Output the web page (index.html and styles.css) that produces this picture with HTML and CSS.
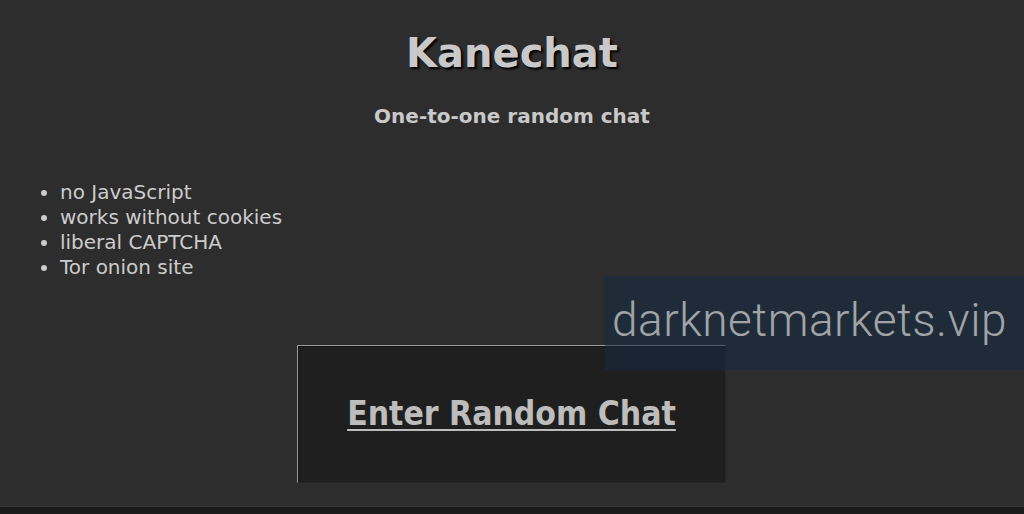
FILE: index.html
```html
<!DOCTYPE html>
<html lang="en">
  <head>
    <meta charset="utf-8">
    <meta name="viewport" content="width=device-width, initial-scale=1">
    <title>Kanechat</title>
    <link rel="stylesheet" href="styles.css">
  </head>

  <body>
    <div class="page">
      <h1 class="title">Kanechat</h1>
      <p class="tagline">One-to-one random chat</p>
      <ul class="features">
        <li>no JavaScript</li>
        <li>works without cookies</li>
        <li>liberal CAPTCHA</li>
        <li>Tor onion site</li>
      </ul>
      <div class="enter">
        <a href="#" class="enter-link">Enter Random Chat</a>
      </div>
    </div>
    <div class="footer"></div>
    <div class="watermark">darknetmarkets.vip</div>
  </body>
</html>
```

FILE: styles.css
```css
html {
  background: #1b1b1b;
}
body {
  margin: 0;
  background: #2d2d2d;
  color: #cccccc;
  font-family: "DejaVu Sans", sans-serif;
}
.page {
  height: 506px;
  overflow: hidden;
}
.title {
  margin: 30px 0 0;
  text-align: center;
  font-size: 40px;
  line-height: 46px;
  color: #c9c9c9;
  text-shadow: 2px 2px 2px #000;
}
.tagline {
  margin: 28px 0 0;
  text-align: center;
  font-size: 20px;
  font-weight: bold;
  line-height: 24px;
  color: #c9c9c9;
}
.features {
  margin: 52px 0 0;
  padding-left: 60px;
  font-size: 20px;
  line-height: 25px;
}
.enter {
  box-sizing: border-box;
  width: 429px;
  height: 138px;
  margin: 65px 0 0 297px;
  display: flex;
  justify-content: center;
  align-items: center;
  background: #1f1f1f;
  border: 1px solid #262626;
  border-top-color: #9a9a9a;
  border-left-color: #9a9a9a;
  box-shadow: inset 1px 1px 0 #151515;
}
.enter-link {
  margin-bottom: 2px;
  font-family: "DejaVu Sans Condensed", "DejaVu Sans", sans-serif;
  font-stretch: condensed;
  font-weight: bold;
  font-size: 33.4px;
  color: #bdbdbd;
  text-decoration: underline;
  text-decoration-thickness: 2px;
  text-underline-offset: 4px;
}
.footer {
  height: 8px;
  border-top: 1px solid #3a3a3a;
  background: #1b1b1b;
}
.watermark {
  position: absolute;
  top: 276px;
  left: 605px;
  width: 419px;
  height: 94px;
  box-sizing: border-box;
  padding: 16px 0 0 7px;
  background: rgba(22, 42, 68, 0.55);
  color: #a0a4a8;
  font-family: Roboto, sans-serif;
  font-weight: 300;
  font-size: 46px;
  line-height: 56px;
  letter-spacing: 0.5px;
  white-space: nowrap;
}
```
